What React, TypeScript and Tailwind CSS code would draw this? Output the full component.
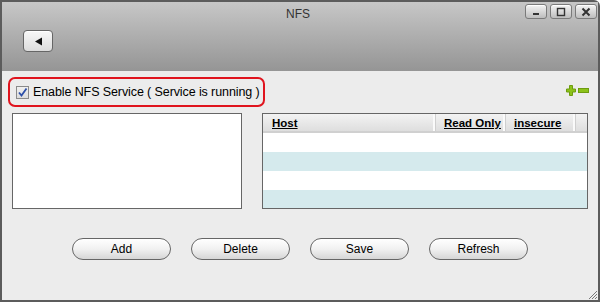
import React from 'react';

const font = { fontFamily: '"Liberation Sans", Arial, sans-serif' };

function WinButton({ kind }: { kind: 'min' | 'max' | 'close' }) {
  return (
    <div className="w-[22px] h-[15px] rounded-[3px] border border-[#7a7a7a] bg-gradient-to-b from-[#f4f4f4] to-[#bdbdbd] flex items-center justify-center shadow-[inset_0_1px_0_#fff]">
      <svg width="12" height="10" viewBox="0 0 12 10">
        {kind === 'min' && <rect x="3" y="6" width="6" height="2" fill="#333" />}
        {kind === 'max' && <rect x="2.5" y="1.5" width="7" height="7" fill="none" stroke="#333" strokeWidth="1.4" />}
        {kind === 'close' && (
          <path d="M2.5 1.5 L9.5 8.5 M9.5 1.5 L2.5 8.5" stroke="#333" strokeWidth="2" />
        )}
      </svg>
    </div>
  );
}

function PillButton({ label }: { label: string }) {
  return (
    <button
      className="w-[99px] h-[22px] rounded-full border border-[#666] bg-gradient-to-b from-[#ffffff] via-[#f1f1f1] to-[#d6d6d6] text-[12px] text-black shadow-[inset_0_1px_0_#fff]"
      style={font}
    >
      {label}
    </button>
  );
}

export default function App() {
  const cols = [
    { name: 'Host', w: 'w-[172px]' },
    { name: 'Read Only', w: 'w-[70px]' },
    { name: 'insecure', w: 'w-[70px]' },
  ];

  return (
    <div className="w-[600px] h-[302px] relative overflow-hidden" style={font}>
      <div className="w-full h-full flex flex-col border-2 border-[#5c5c5c] rounded-tr-[6px] bg-[#ececec]">
        {/* title bar */}
        <div className="h-[69px] bg-gradient-to-b from-[#c7c7c7] to-[#959595] flex flex-col">
          <div className="grid grid-cols-[1fr_auto_1fr] items-start h-[20px]">
            <div />
            <div className="text-[12px] text-[#333] pt-[3px] pr-[4px]">NFS</div>
            <div className="flex justify-end gap-[3px] pt-[2px] pr-[1px]">
              <WinButton kind="min" />
              <WinButton kind="max" />
              <WinButton kind="close" />
            </div>
          </div>
          <div className="pl-[21px] pt-[8px]">
            <button className="w-[30px] h-[22px] rounded-[4px] border border-[#666] bg-gradient-to-b from-[#f8f8f8] to-[#dcdcdc] flex items-center justify-center shadow-[inset_0_1px_0_#fff]">
              <svg width="9" height="9" viewBox="0 0 9 9">
                <path d="M1 4.5 L8 0.5 L8 8.5 Z" fill="#111" />
              </svg>
            </button>
          </div>
        </div>

        {/* content */}
        <div className="flex-1 flex flex-col">
          <div className="flex items-center justify-between pt-[6px] pl-[6px] pr-[9px]">
            <div className="w-[257px] h-[30px] rounded-[7px] border-2 border-[#e0141e] flex items-center pl-[6px] gap-[4px]">
              <span className="w-[13px] h-[13px] shrink-0 border border-[#8a8a8a] bg-gradient-to-b from-[#f0f0f0] to-[#dcdcdc] flex items-center justify-center">
                <svg width="11" height="11" viewBox="0 0 11 11">
                  <path d="M2 5.5 L4.5 8.5 L9.5 1.5" fill="none" stroke="#2c4fa8" strokeWidth="1.8" />
                </svg>
              </span>
              <span className="text-[12.5px] text-black leading-none whitespace-nowrap tracking-[-0.1px]">
                Enable NFS Service ( Service is running )
              </span>
            </div>
            <div className="flex items-center gap-[2px] pb-[4px]">
              <svg width="10" height="11" viewBox="0 0 10 11">
                <path d="M3.5 0.5 H6.5 V4 H9.5 V7 H6.5 V10.5 H3.5 V7 H0.5 V4 H3.5 Z" fill="#8cc21a" stroke="#6e9c10" strokeWidth="1" />
              </svg>
              <svg width="11" height="5" viewBox="0 0 11 5">
                <rect x="0.5" y="0.5" width="10" height="4" fill="#8cc21a" stroke="#6e9c10" strokeWidth="1" />
              </svg>
            </div>
          </div>

          <div className="flex gap-[20px] pl-[10px] pt-[6px]">
            <div className="w-[230px] h-[96px] bg-white border border-[#666]" />
            <div className="w-[326px] h-[96px] border border-[#666] bg-[#d5eaed] flex flex-col overflow-hidden">
              <div className="h-[19px] shrink-0 flex bg-gradient-to-b from-[#f3f3f3] to-[#dedede] border-b-2 border-[#d0d0d0]">
                {cols.map((c) => (
                  <div
                    key={c.name}
                    className={`${c.w} shrink-0 border-r-2 border-[#fafafa] shadow-[1px_0_0_#cfcfcf] pl-[9px] text-[11.5px] font-bold text-black underline leading-[18px] whitespace-nowrap overflow-hidden`}
                  >
                    {c.name}
                  </div>
                ))}
                <div className="flex-1" />
              </div>
              {[0, 1, 2, 3].map((i) => (
                <div key={i} className={`h-[19px] shrink-0 ${i % 2 === 0 ? 'bg-white' : 'bg-[#d5eaed]'}`} />
              ))}
            </div>
          </div>

          <div className="flex justify-center gap-[20px] pt-[29px]">
            <PillButton label="Add" />
            <PillButton label="Delete" />
            <PillButton label="Save" />
            <PillButton label="Refresh" />
          </div>
        </div>
      </div>

      {/* resize grip */}
      <svg className="absolute right-[2px] bottom-[2px]" width="10" height="10" viewBox="0 0 10 10">
        <path d="M9 1 L1 9 M9 4 L4 9 M9 7 L7 9" stroke="#777" strokeWidth="1" />
      </svg>
    </div>
  );
}
